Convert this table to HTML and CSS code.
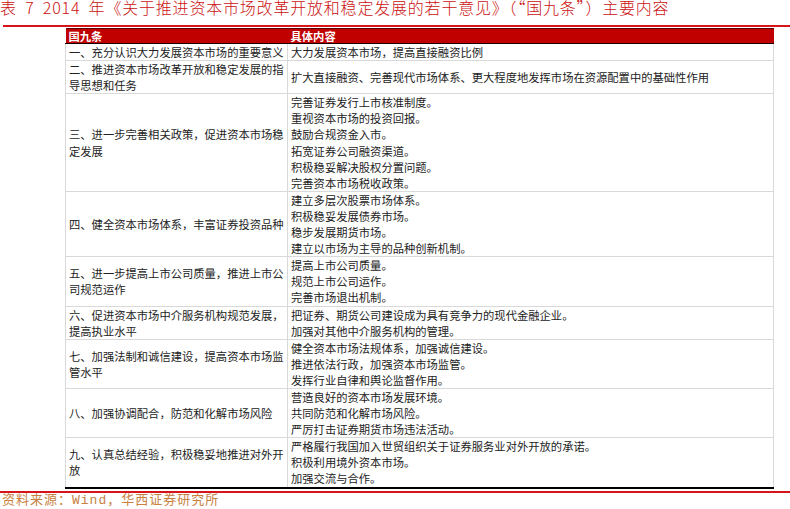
FILE: index.html
```html
<!DOCTYPE html>
<html lang="zh">
<head>
<meta charset="utf-8">
<link rel="stylesheet" href="styles.css">
</head>
<body>
<div class="page">
  <div class="title">表 7 2014 年《关于推进资本市场改革开放和稳定发展的若干意见》（“国九条”）主要内容</div>
  <div class="rule-top"></div>
  <div class="table-wrap">
    <table class="tbl">
      <colgroup><col class="c1"><col class="c2"></colgroup>
      <thead>
        <tr><th>国九条</th><th>具体内容</th></tr>
      </thead>
      <tbody>
        <tr><td class="l">一、充分认识大力发展资本市场的重要意义</td><td class="r">大力发展资本市场，提高直接融资比例</td></tr>
        <tr><td class="l">二、推进资本市场改革开放和稳定发展的指导思想和任务</td><td class="r">扩大直接融资、完善现代市场体系、更大程度地发挥市场在资源配置中的基础性作用</td></tr>
        <tr><td class="l">三、进一步完善相关政策，促进资本市场稳定发展</td><td class="r">完善证券发行上市核准制度。<br>重视资本市场的投资回报。<br>鼓励合规资金入市。<br>拓宽证券公司融资渠道。<br>积极稳妥解决股权分置问题。<br>完善资本市场税收政策。</td></tr>
        <tr><td class="l">四、健全资本市场体系，丰富证券投资品种</td><td class="r">建立多层次股票市场体系。<br>积极稳妥发展债券市场。<br>稳步发展期货市场。<br>建立以市场为主导的品种创新机制。</td></tr>
        <tr><td class="l">五、进一步提高上市公司质量，推进上市公司规范运作</td><td class="r">提高上市公司质量。<br>规范上市公司运作。<br>完善市场退出机制。</td></tr>
        <tr><td class="l">六、促进资本市场中介服务机构规范发展，提高执业水平</td><td class="r">把证券、期货公司建设成为具有竞争力的现代金融企业。<br>加强对其他中介服务机构的管理。</td></tr>
        <tr><td class="l">七、加强法制和诚信建设，提高资本市场监管水平</td><td class="r">健全资本市场法规体系，加强诚信建设。<br>推进依法行政，加强资本市场监管。<br>发挥行业自律和舆论监督作用。</td></tr>
        <tr><td class="l">八、加强协调配合，防范和化解市场风险</td><td class="r">营造良好的资本市场发展环境。<br>共同防范和化解市场风险。<br>严厉打击证券期货市场违法活动。</td></tr>
        <tr><td class="l">九、认真总结经验，积极稳妥地推进对外开放</td><td class="r">严格履行我国加入世贸组织关于证券服务业对外开放的承诺。<br>积极利用境外资本市场。<br>加强交流与合作。</td></tr>
      </tbody>
    </table>
  </div>
  <div class="rule-bottom"></div>
  <div class="source">资料来源：Wind，华西证券研究所</div>
</div>
</body>
</html>
```

FILE: styles.css
```css
html, body {
  margin: 0;
  padding: 0;
  background: #ffffff;
}

.page {
  width: 790px;
  height: 509px;
  overflow: hidden;
}

.title {
  margin-top: -5px;
  height: 30px;
  font-family: "Noto Sans CJK SC", sans-serif;
  font-weight: 300;
  font-size: 16px;
  line-height: 24px;
  letter-spacing: 0.8px;
  word-spacing: 4px;
  color: #cc1111;
  white-space: nowrap;
}

.rule-top {
  margin-left: 3px;
  height: 2px;
  background: #d7141a;
}

.table-wrap {
  margin-left: 65px;
  width: 708px;
  margin-top: 1px;
}

.tbl {
  width: 708px;
  border-collapse: collapse;
  table-layout: fixed;
  font-family: "Noto Sans CJK SC", sans-serif;
  font-size: 11.3px;
  line-height: 16.1px;
  color: #222222;
}

.c1 { width: 222px; }
.c2 { width: 486px; }

.tbl th {
  background: #c00000;
  color: #ffffff;
  font-weight: bold;
  text-align: left;
  padding: 0 3px;
  height: 14px;
  line-height: 14px;
  border-top: 1px solid #5a0000;
  border-bottom: 1px solid #1a0000;
}

.tbl td {
  border: 1px solid #d9d9d9;
  padding: 0 3px;
  vertical-align: middle;
  white-space: normal;
}

.tbl tbody tr:last-child td {
  border-bottom: 2px solid #000000;
}

.tbl td.r {
  white-space: nowrap;
}

.rule-bottom {
  margin-top: 2px;
  height: 2px;
  background: #d7141a;
}

.source {
  font-family: "Liberation Mono", "Noto Sans CJK SC", monospace;
  font-size: 13px;
  line-height: 15px;
  letter-spacing: 1px;
  color: #c8813f;
  padding-left: 2px;
  white-space: nowrap;
}
```
